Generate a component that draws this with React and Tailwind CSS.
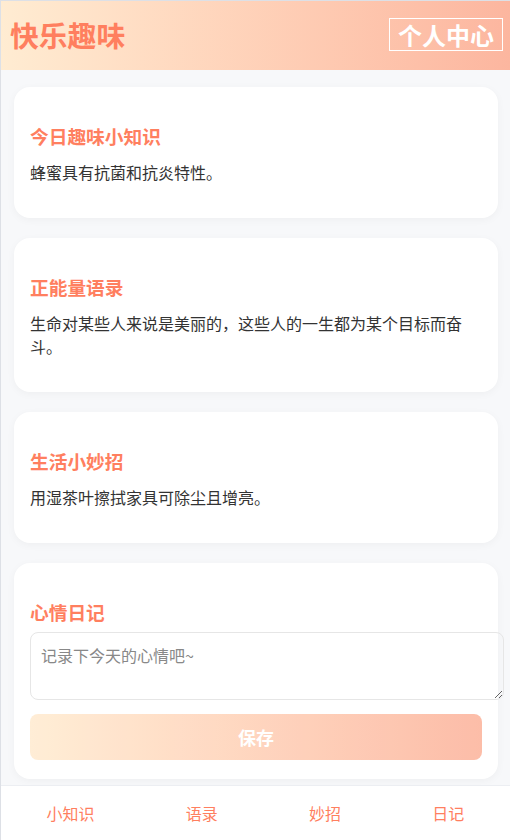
import { useState } from 'react';

const tips = [
  { title: '今日趣味小知识', text: '蜂蜜具有抗菌和抗炎特性。' },
  { title: '正能量语录', text: '生命对某些人来说是美丽的，这些人的一生都为某个目标而奋斗。' },
  { title: '生活小妙招', text: '用湿茶叶擦拭家具可除尘且增亮。' },
];

function Card({ title, children, last }) {
  return (
    <section
      className={`ml-[13px] w-[484px] bg-white rounded-2xl shadow-[0_2px_8px_rgba(0,0,0,0.04)] px-4 pt-[35px] ${last ? 'pb-[19px]' : 'pb-[34px]'}`}
    >
      <h3 className="text-[18.72px] leading-[27px] font-bold text-[#ff7f5f]">{title}</h3>
      {children}
    </section>
  );
}

export default function App() {
  const [diary, setDiary] = useState('');

  return (
    <div
      className="h-[840px] flex flex-col bg-[#f7f8fa] border-t border-l border-[#dde0e6] overflow-hidden"
      style={{ fontFamily: '"Noto Sans CJK SC", "Noto Sans", sans-serif' }}
    >
      {/* Header */}
      <header className="h-[69px] shrink-0 flex items-center justify-between pl-[9px] pr-[7px] bg-gradient-to-r from-[#ffecd2] to-[#fcb69f]">
        <h1 className="text-[28.8px] leading-none font-bold text-[#ff7f5f]">快乐趣味</h1>
        <button className="border border-white text-white text-[24px] leading-[31px] font-bold px-[8px] mb-[3px]">
          个人中心
        </button>
      </header>

      {/* Cards */}
      <main className="flex-1 flex flex-col gap-5 pt-[17px] overflow-hidden">
        {tips.map((tip) => (
          <Card key={tip.title} title={tip.title}>
            <p className="mt-[12px] text-[16px] leading-[23px] text-[#333]">{tip.text}</p>
          </Card>
        ))}

        <Card title="心情日记" last>
          <textarea
            value={diary}
            onChange={(e) => setDiary(e.target.value)}
            placeholder="记录下今天的心情吧~"
            className="mt-[7px] box-content block w-full h-[46px] p-[10px] border border-[#e6e6e6] rounded-lg text-[16px] leading-[24px] text-[#333] placeholder:text-[#888] outline-none"
          />
          <button className="mt-[14px] w-full h-[46px] rounded-lg bg-gradient-to-r from-[#ffecd2] to-[#fcb69f] opacity-90 text-white text-[18px] font-bold">
            保存
          </button>
        </Card>
      </main>

      {/* Bottom nav */}
      <nav className="h-[55px] shrink-0 bg-white border-t border-[#eceef2] flex items-center justify-around">
        {['小知识', '语录', '妙招', '日记'].map((label) => (
          <button key={label} className="text-[16px] text-[#ff7f5f]">
            {label}
          </button>
        ))}
      </nav>
    </div>
  );
}
